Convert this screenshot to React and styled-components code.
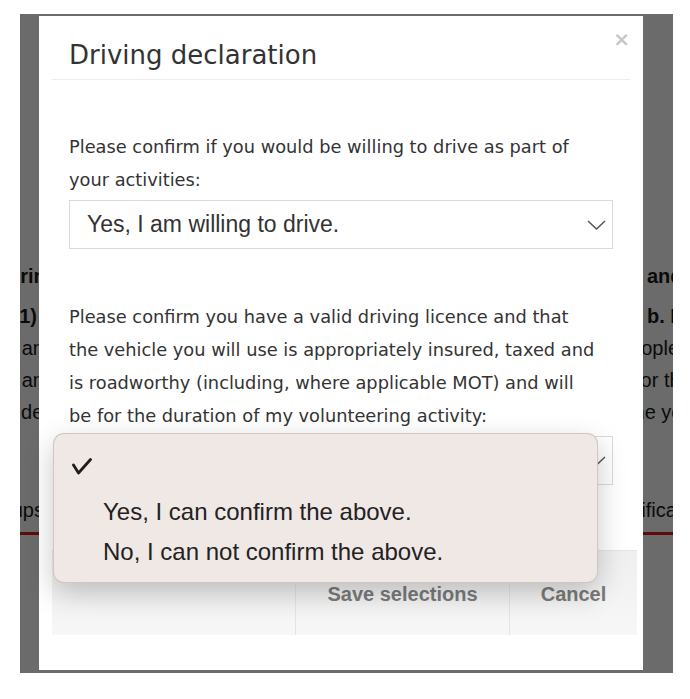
import React from "react";
import styled, { createGlobalStyle } from "styled-components";

const GlobalStyle = createGlobalStyle`
  * {
    box-sizing: border-box;
  }
  body {
    margin: 0;
    background: #fff;
  }
`;

// page that sits behind the overlay (only its edges show)
const pageRows = [
  { left: "During", leftShift: -6, right: "and vehicles", rightShift: 1, bold: true },
  { left: "(1)", leftShift: 15, right: "b. If", rightShift: 1, bold: true },
  { left: "and", leftShift: -3, right: "people", rightShift: -27 },
  { left: "and", leftShift: -3, right: "for the", rightShift: -11 },
  { left: "decide", leftShift: -28, right: "the year", rightShift: -18 },
];

const selectOptions = ["Yes, I can confirm the above.", "No, I can not confirm the above."];

const Chevron = () => (
  <svg width="19" height="10" viewBox="0 0 19 10" fill="none">
    <polyline points="1,1 9.5,9 18,1" stroke="#555" strokeWidth="1.5" />
  </svg>
);

const Check = () => (
  <svg width="20" height="17" viewBox="0 0 20 17" fill="none">
    <polyline
      points="1.5,7 6.5,15 18.5,1.5"
      stroke="#1e1e1e"
      strokeWidth="2.8"
      strokeLinecap="round"
      strokeLinejoin="round"
    />
  </svg>
);

const App = () => {
  return (
    <>
      <GlobalStyle />
      <Frame>
        <Screen>
          <Page>
            {pageRows.map((row, i) => (
              <PageRow key={i} $bold={row.bold} $gap={i === 0 ? 8 : 0}>
                <PageLeft>
                  <Fragment style={{ marginRight: row.leftShift }}>{row.left}</Fragment>
                </PageLeft>
                <span />
                <PageRight>
                  <Fragment style={{ marginLeft: row.rightShift }}>{row.right}</Fragment>
                </PageRight>
              </PageRow>
            ))}
            <TabRow>
              <PageLeft>
                <Fragment style={{ marginRight: 8 }}>Groups</Fragment>
              </PageLeft>
              <span />
              <PageRight>
                <Fragment style={{ marginLeft: -47 }}>Qualifications</Fragment>
              </PageRight>
            </TabRow>
          </Page>

          <Overlay />

          <Modal>
            <Header>
              <Title>Driving declaration</Title>
            </Header>
            <Close>×</Close>

            <Body>
              <FormGroup>
                <Label>
                  Please confirm if you would be willing to drive as part of
                  <br />
                  your activities:
                </Label>
                <Select>
                  <span>Yes, I am willing to drive.</span>
                  <Chevron />
                </Select>
              </FormGroup>

              <FormGroup>
                <Label>
                  Please confirm you have a valid driving licence and that
                  <br />
                  the vehicle you will use is appropriately insured, taxed and
                  <br />
                  is roadworthy (including, where applicable MOT) and will
                  <br />
                  be for the duration of my volunteering activity:
                </Label>
                <Select>
                  <span />
                  <Chevron />
                </Select>
              </FormGroup>
            </Body>

            <Footer>
              <FooterButton $width={214}>Save selections</FooterButton>
              <FooterButton $width={128}>Cancel</FooterButton>
            </Footer>

            <Menu>
              <MenuItem $first>
                <CheckSlot>
                  <Check />
                </CheckSlot>
              </MenuItem>
              {selectOptions.map((opt) => (
                <MenuItem key={opt}>
                  <CheckSlot />
                  {opt}
                </MenuItem>
              ))}
            </Menu>
          </Modal>
        </Screen>
      </Frame>
    </>
  );
};

const Frame = styled.div`
  padding: 14px 17px 26px 20px;
  background: #fff;
`;

const Screen = styled.div`
  position: relative;
  width: 653px;
  height: 659px;
  overflow: hidden;
  background: #fff;
`;

// BACKGROUND PAGE
const Page = styled.div`
  padding-top: 246px;
  font-family: "Liberation Sans", Arial, sans-serif;
  font-size: 20px;
  line-height: 32px;
  color: #1a1a1a;
`;

const PageRow = styled.div`
  display: grid;
  grid-template-columns: 32px 1fr 27px;
  font-weight: ${(p) => (p.$bold ? "bold" : "normal")};
  margin-bottom: ${(p) => p.$gap}px;
`;

const PageLeft = styled.div`
  display: flex;
  justify-content: flex-end;
  white-space: nowrap;
`;

const PageRight = styled.div`
  display: flex;
  white-space: nowrap;
`;

const Fragment = styled.span`
  flex: none;
`;

const TabRow = styled(PageRow)`
  margin-top: 66px;
  padding-bottom: 6px;
  border-bottom: 3px solid #e31b1b;
`;

const Overlay = styled.div`
  position: absolute;
  inset: 0;
  background: rgba(0, 0, 0, 0.58);
`;

// MODAL
const Modal = styled.div`
  position: absolute;
  top: 2px;
  left: 19px;
  width: 604px;
  height: 654px;
  background: #fff;
  display: flex;
  flex-direction: column;
`;

const Header = styled.div`
  margin: 0 13px;
  padding: 24px 17px 9px;
  border-bottom: 1px solid #ececec;
`;

const Title = styled.h4`
  margin: 0;
  font-family: "DejaVu Sans", Verdana, sans-serif;
  font-size: 26px;
  line-height: 30px;
  font-weight: normal;
  color: #333;
`;

const Close = styled.span`
  position: absolute;
  top: 13px;
  right: 13px;
  font-family: "DejaVu Sans", Verdana, sans-serif;
  font-size: 20px;
  line-height: 20px;
  font-weight: bold;
  color: #c6c6c6;
`;

const Body = styled.div`
  padding: 50px 30px 65px;
  display: flex;
  flex-direction: column;
  gap: 51px;
`;

const FormGroup = styled.div`
  display: flex;
  flex-direction: column;
  gap: 4px;
`;

const Label = styled.p`
  margin: 0;
  font-family: "DejaVu Sans", Verdana, sans-serif;
  font-size: 17.8px;
  line-height: 33px;
  color: #333;
  white-space: nowrap;
`;

const Select = styled.div`
  height: 49px;
  border: 1px solid #dadada;
  background: #fff;
  padding: 0 6px 0 17px;
  display: flex;
  align-items: center;
  justify-content: space-between;
  font-family: "Liberation Sans", Arial, sans-serif;
  font-size: 23px;
  color: #333;
`;

const Footer = styled.div`
  margin: 0 6px 35px 13px;
  height: 85px;
  border-top: 1px solid #e6e6e6;
  background: linear-gradient(#efefef, #f7f7f7);
  display: flex;
  justify-content: flex-end;
`;

const FooterButton = styled.div`
  width: ${(p) => p.$width}px;
  border-left: 1px solid #e4e4e4;
  display: flex;
  align-items: center;
  justify-content: center;
  padding-top: 3px;
  font-family: "Liberation Sans", Arial, sans-serif;
  font-size: 20px;
  font-weight: bold;
  color: #7b7b7b;
`;

// NATIVE SELECT POPUP
const Menu = styled.div`
  position: absolute;
  left: 14px;
  top: 417px;
  width: 545px;
  height: 150px;
  padding: 12px 0;
  background: #f0e8e5;
  border: 1px solid rgba(0, 0, 0, 0.14);
  border-radius: 11px;
  box-shadow: 0 10px 28px rgba(0, 0, 0, 0.22);
  font-family: "Liberation Sans", Arial, sans-serif;
  font-size: 24px;
  color: #222;
`;

const MenuItem = styled.div`
  height: 40px;
  display: flex;
  align-items: center;
  margin-bottom: ${(p) => (p.$first ? "6px" : "0")};
`;

const CheckSlot = styled.span`
  width: 49px;
  padding-left: 18px;
  display: flex;
  align-items: center;
`;

export default App;
